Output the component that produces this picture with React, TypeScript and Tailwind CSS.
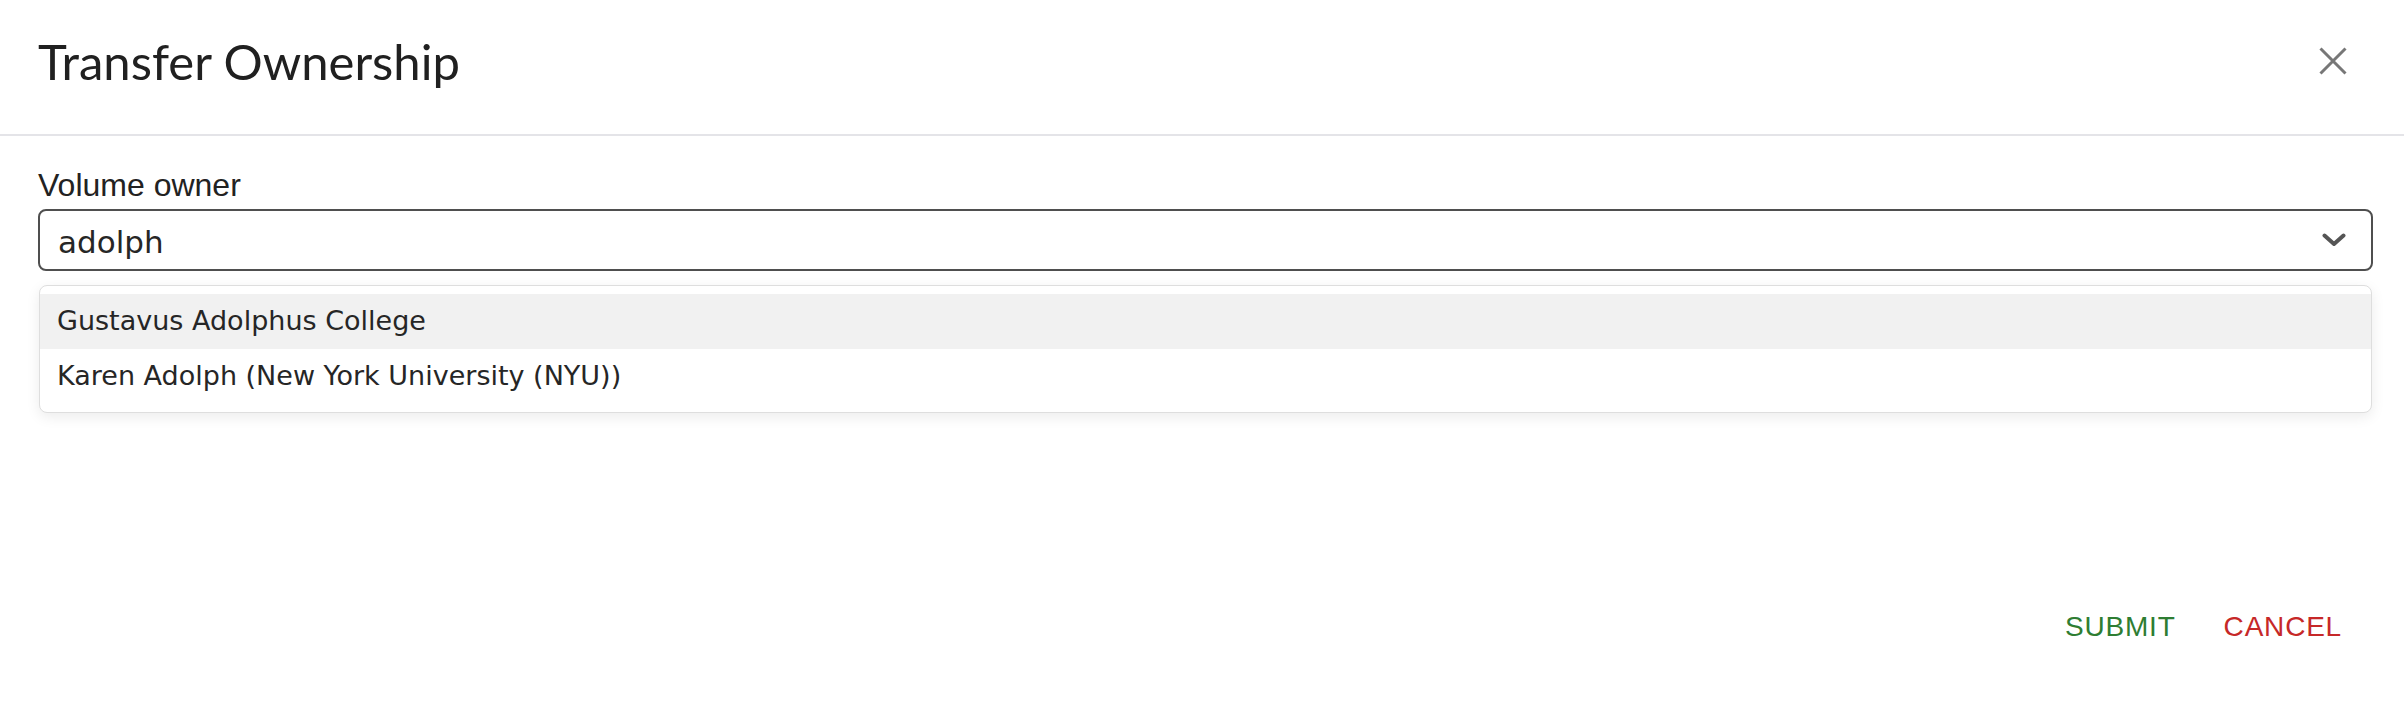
import React from 'react';

const options = ['Gustavus Adolphus College', 'Karen Adolph (New York University (NYU))'];

export default function App() {
  return (
    <div className="w-full h-[706px] bg-white">
      {/* header */}
      <div className="flex items-center justify-between h-[136px] pb-[12px] pl-[38px] pr-[57px] border-b-2 border-[#e4e4e8]">
        <h2 className="text-[49px] leading-none text-[#202020] font-['Lato',sans-serif] font-normal">
          Transfer Ownership
        </h2>
        <button className="w-[28px] h-[28px] flex items-center justify-center">
          <svg width="28" height="28" viewBox="0 0 28 28" fill="none">
            <path d="M1.5 1.5 L26.5 26.5 M26.5 1.5 L1.5 26.5" stroke="#777" strokeWidth="3" />
          </svg>
        </button>
      </div>

      {/* content */}
      <div className="pl-[38px] pr-[31px] pt-[32px]">
        <label className="block text-[32px] leading-[34px] text-[#222] font-['Liberation_Sans',Arial,sans-serif] mb-[7px]">
          Volume owner
        </label>
        <div className="flex items-center justify-between h-[62px] border-2 border-[#4f4f4f] rounded-[8px] pl-[18px] pr-[25px]">
          <span className="pt-[4px] text-[31px] text-[#262626] font-['DejaVu_Sans',sans-serif]">adolph</span>
          <svg width="24" height="14" viewBox="0 0 24 14" fill="none">
            <path d="M2.5 2.5 L12 11 L21.5 2.5" stroke="#555" strokeWidth="4" strokeLinecap="round" strokeLinejoin="round" />
          </svg>
        </div>
        <div className="mt-[14px] mx-[1px] border border-[#dedede] rounded-[8px] py-[8px] bg-white shadow-[0_4px_14px_rgba(0,0,0,0.08)]">
          {options.map((o, i) => (
            <div
              key={o}
              className={`flex items-center h-[55px] px-[17px] text-[27px] text-[#262626] font-['DejaVu_Sans',sans-serif] ${i === 0 ? 'bg-[#f1f1f1]' : ''}`}
            >
              {o}
            </div>
          ))}
        </div>
      </div>

      {/* actions */}
      <div className="flex justify-end gap-[16px] pr-[46px] mt-[177px] font-['Liberation_Sans',Arial,sans-serif]">
        <button className="px-[16px] py-[12px] text-[28px] leading-[1.75] tracking-[0.8px] text-[#2e7d32]">SUBMIT</button>
        <button className="px-[16px] py-[12px] text-[28px] leading-[1.75] tracking-[0.8px] text-[#c62828]">CANCEL</button>
      </div>
    </div>
  );
}
